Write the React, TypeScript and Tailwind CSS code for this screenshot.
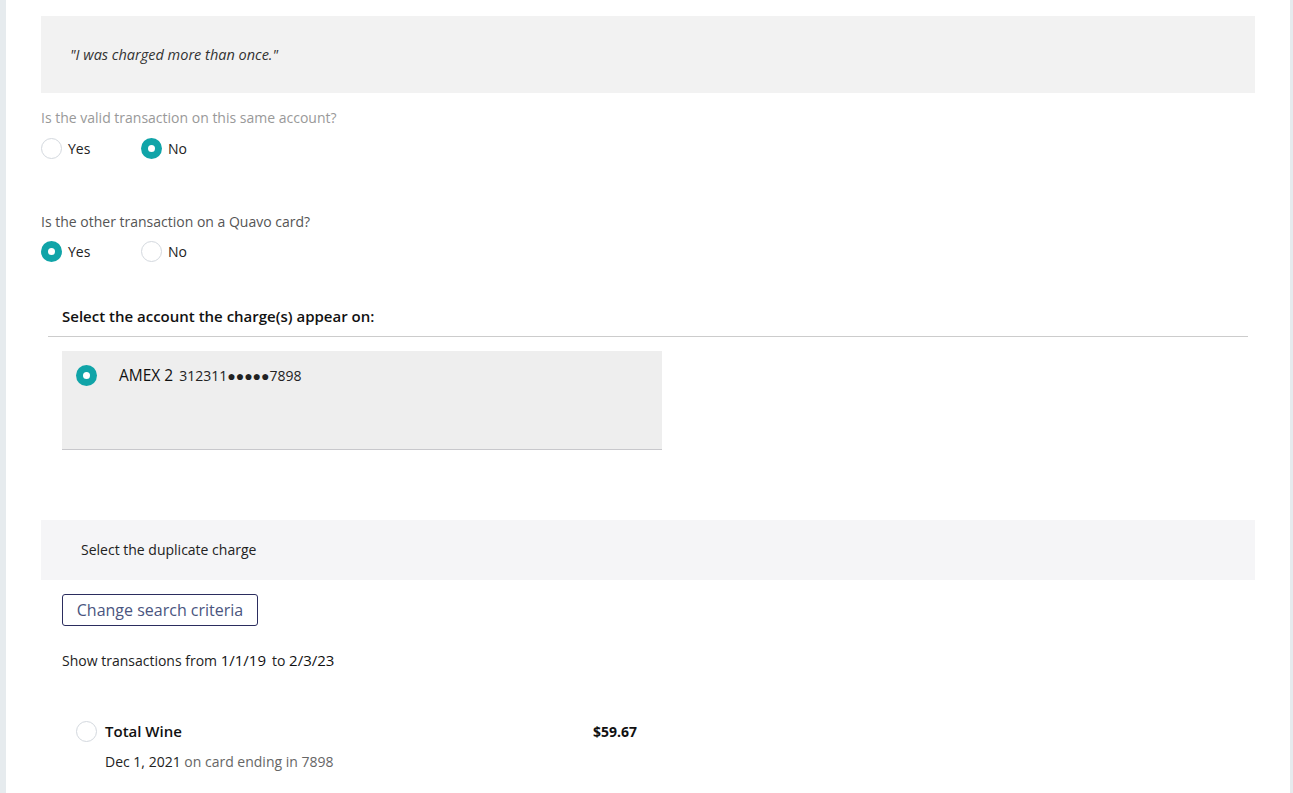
import React from "react"

function Radio({ checked }: { checked?: boolean }) {
    if (checked) {
        return (
            <span className="flex h-[21px] w-[21px] shrink-0 items-center justify-center rounded-full bg-[#10a4a8]">
                <span className="h-[7px] w-[7px] rounded-full bg-white"></span>
            </span>
        )
    }
    return <span className="h-[21px] w-[21px] shrink-0 rounded-full border border-[#d3d8de] bg-white"></span>
}

function Option({ label, checked, width }: { label: string; checked?: boolean; width: string }) {
    return (
        <label className={`flex items-center gap-[6px] ${width}`}>
            <Radio checked={checked} />
            <span className="text-[14px] text-[#222]">{label}</span>
        </label>
    )
}

export default function App() {
    return (
        <div className="flex h-[793px] w-full overflow-hidden bg-[#e6ebee] font-['Open_Sans',sans-serif]">
            <div className="ml-[6px] mr-[3px] flex-1 bg-white pl-[35px] pr-[35px] pt-[16px]">
                <div className="flex h-[77px] items-center bg-[#f2f2f2] pl-[29px]">
                    <p className="text-[14.5px] italic text-[#333]">"I was charged more than once."</p>
                </div>

                <p className="mt-[14px] text-[14px] text-[#999]">Is the valid transaction on this same account?</p>
                <div className="mt-[10px] flex">
                    <Option label="Yes" width="w-[100px]" />
                    <Option label="No" checked width="w-[100px]" />
                </div>

                <p className="mt-[52px] text-[14px] text-[#555]">Is the other transaction on a Quavo card?</p>
                <div className="mt-[9px] flex">
                    <Option label="Yes" checked width="w-[100px]" />
                    <Option label="No" width="w-[100px]" />
                </div>

                <div className="ml-[7px] mr-[7px] mt-[43px] border-b border-[#cccccc] pb-[8px] pl-[14px]">
                    <h2 className="text-[15px] font-semibold text-[#111]">Select the account the charge(s) appear on:</h2>
                </div>

                <div className="ml-[21px] mt-[14px] h-[99px] w-[600px] border-b border-[#c8c8cc] bg-[#eeeeee] pl-[14px] pt-[13px]">
                    <div className="flex items-center">
                        <Radio checked />
                        <span className="ml-[22px] text-[15.5px] text-[#111]">AMEX 2</span>
                        <span className="ml-[6px] text-[14px] text-[#222]">312311●●●●●7898</span>
                    </div>
                </div>

                <div className="mt-[70px] flex h-[60px] items-center bg-[#f5f5f7] pl-[40px]">
                    <p className="text-[14px] text-[#222]">Select the duplicate charge</p>
                </div>

                <div className="ml-[21px] mt-[14px]">
                    <button className="h-[32px] w-[196px] rounded-[3px] border border-[#2b2d5e] text-[16px] text-[#4a5580]">
                        Change search criteria
                    </button>
                    <p className="mt-[23px] text-[14px] text-[#222]">
                        Show transactions from <span className="text-[15px] text-[#111]">1/1/19</span>
                        <span className="ml-[6px]">to</span>{" "}
                        <span className="text-[15px] text-[#111]">2/3/23</span>
                    </p>
                </div>

                <div className="ml-[35px] mt-[49px]">
                    <div className="flex items-center">
                        <Radio />
                        <span className="ml-[8px] w-[488px] text-[15px] font-semibold text-[#111]">Total Wine</span>
                        <span className="text-[14px] font-bold text-[#111]">$59.67</span>
                    </div>
                    <p className="ml-[29px] mt-[8px] text-[14px] text-[#222]">
                        Dec 1, 2021 <span className="text-[#666]">on card ending in 7898</span>
                    </p>
                </div>
            </div>
        </div>
    )
}
